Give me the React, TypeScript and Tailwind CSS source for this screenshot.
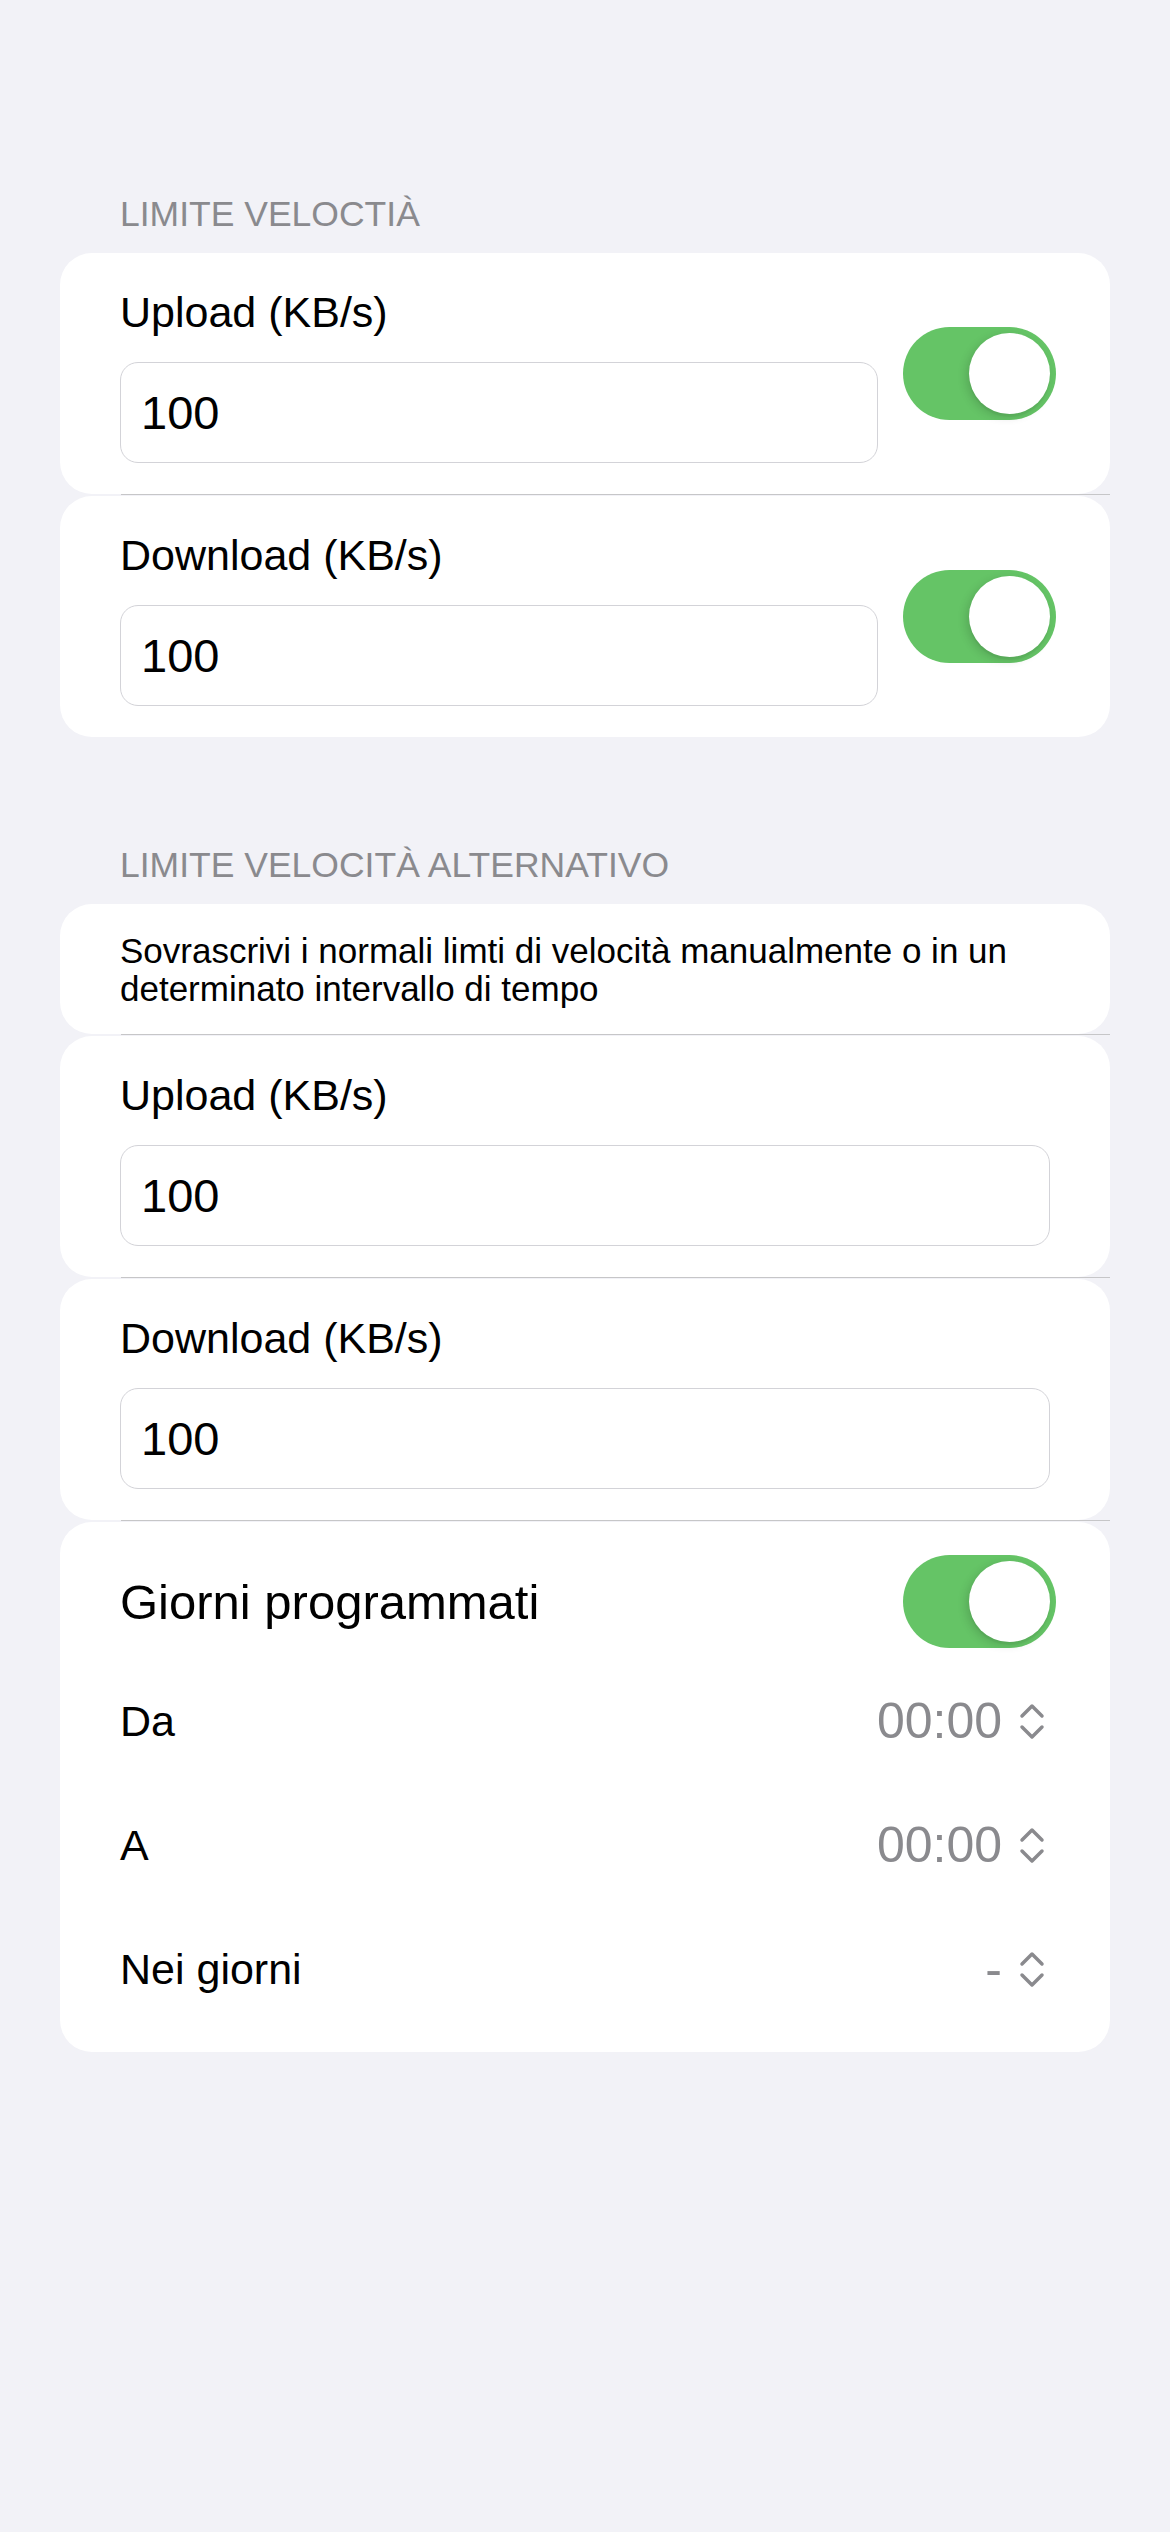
import { useState } from "react";

const fontStack = "font-['Liberation_Sans',Arial,sans-serif]";

function Toggle({ on, onChange }: { on: boolean; onChange: (value: boolean) => void }) {
  return (
    <button
      type="button"
      onClick={() => onChange(!on)}
      className={`relative h-[93px] w-[153px] shrink-0 rounded-full transition-colors ${
        on ? "bg-[#65c466]" : "bg-[#e9e9eb]"
      }`}
    >
      <span
        className={`absolute top-[6px] h-[81px] w-[81px] rounded-full bg-white shadow-[-3px_3px_10px_rgba(0,0,0,0.14),0_3px_1px_rgba(0,0,0,0.04)] transition-all ${
          on ? "left-[66px]" : "left-[6px]"
        }`}
      />
    </button>
  );
}

function Separator() {
  return (
    <div className="h-[2px] pl-[61px]">
      <div className="h-px bg-[#c6c6c8]" />
    </div>
  );
}

function SectionHeader({ children, className = "" }: { children: string; className?: string }) {
  return (
    <p className={`ml-[120px] mb-[18px] text-[35.5px] leading-[42px] text-[#8a8a8e] ${className}`}>{children}</p>
  );
}

function NumberField({ label, value, onChange }: { label: string; value: string; onChange: (v: string) => void }) {
  return (
    <div className="flex min-w-0 flex-1 flex-col pt-[34px] pb-[31px]">
      <label className="text-[43px] leading-[50px] text-black">{label}</label>
      <input
        value={value}
        onChange={(e) => onChange(e.target.value)}
        inputMode="numeric"
        className="mt-[25px] h-[101px] w-full rounded-[18px] border-[1.5px] border-[#d3d3d8] bg-white pl-[20px] text-[47px] text-black outline-none"
      />
    </div>
  );
}

function Chevrons() {
  return (
    <svg width="26" height="39" viewBox="0 0 26 39" fill="none" stroke="#8a8a8e" strokeWidth="3.5" strokeLinecap="round" strokeLinejoin="round">
      <path d="M3 14 L13 4 L23 14" />
      <path d="M3 25 L13 35 L23 25" />
    </svg>
  );
}

function PickerRow({ label, value }: { label: string; value: string }) {
  return (
    <div className="flex h-[124px] items-center justify-between pr-[11px]">
      <span className="text-[43px] leading-[50px] text-black">{label}</span>
      <div className="flex items-center gap-[17px]">
        <span className="text-[50px] leading-[58px] text-[#8a8a8e]">{value}</span>
        <Chevrons />
      </div>
    </div>
  );
}

export default function App() {
  const [upload, setUpload] = useState("100");
  const [download, setDownload] = useState("100");
  const [altUpload, setAltUpload] = useState("100");
  const [altDownload, setAltDownload] = useState("100");
  const [uploadOn, setUploadOn] = useState(true);
  const [downloadOn, setDownloadOn] = useState(true);
  const [scheduled, setScheduled] = useState(true);

  return (
    <div className={`min-h-[2532px] bg-[#f2f2f7] pt-[193px] ${fontStack}`}>
      <SectionHeader>LIMITE VELOCTIÀ</SectionHeader>
      <div className="mx-[60px]">
        <div className="flex items-center gap-[25px] rounded-[32px] bg-white pl-[60px] pr-[54px]">
          <NumberField label="Upload (KB/s)" value={upload} onChange={setUpload} />
          <Toggle on={uploadOn} onChange={setUploadOn} />
        </div>
        <Separator />
        <div className="flex items-center gap-[25px] rounded-[32px] bg-white pl-[60px] pr-[54px]">
          <NumberField label="Download (KB/s)" value={download} onChange={setDownload} />
          <Toggle on={downloadOn} onChange={setDownloadOn} />
        </div>
      </div>

      <SectionHeader className="mt-[107px]">LIMITE VELOCITÀ ALTERNATIVO</SectionHeader>
      <div className="mx-[60px]">
        <div className="rounded-[32px] bg-white pl-[60px] pr-[60px] pt-[28px] pb-[26px]">
          <p className="text-[35px] leading-[38px] text-black">
            Sovrascrivi i normali limti di velocità manualmente o in un determinato intervallo di tempo
          </p>
        </div>
        <Separator />
        <div className="flex rounded-[32px] bg-white pl-[60px] pr-[60px]">
          <NumberField label="Upload (KB/s)" value={altUpload} onChange={setAltUpload} />
        </div>
        <Separator />
        <div className="flex rounded-[32px] bg-white pl-[60px] pr-[60px]">
          <NumberField label="Download (KB/s)" value={altDownload} onChange={setAltDownload} />
        </div>
        <Separator />
        <div className="rounded-[32px] bg-white pl-[60px] pr-[54px] pt-[33px] pb-[21px]">
          <div className="flex h-[93px] items-center justify-between">
            <span className="text-[49px] leading-[56px] text-black">Giorni programmati</span>
            <Toggle on={scheduled} onChange={setScheduled} />
          </div>
          <div className="mt-[11px]">
            <PickerRow label="Da" value="00:00" />
            <PickerRow label="A" value="00:00" />
            <PickerRow label="Nei giorni" value="-" />
          </div>
        </div>
      </div>
    </div>
  );
}
